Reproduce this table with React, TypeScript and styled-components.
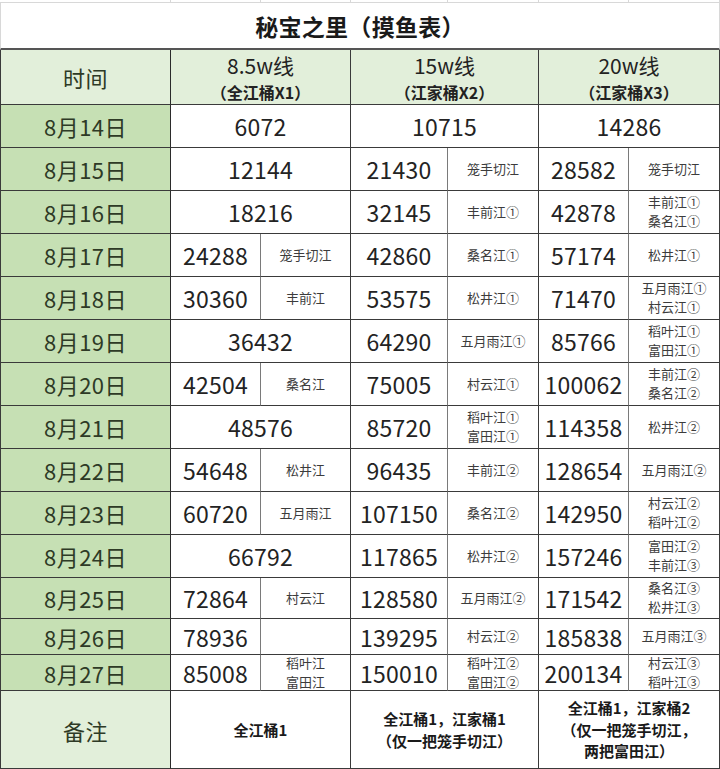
import React from "react";
import styled, { createGlobalStyle } from "styled-components";

const GlobalStyle = createGlobalStyle`
  html, body {
    margin: 0;
    padding: 0;
    background: #ffffff;
  }
  body {
    font-family: "Noto Sans CJK SC", "Noto Sans", sans-serif;
    color: #222;
  }
`;

type Split = { value: string; note?: string[] };
type Row = { date: string; cols: Split[]; merged: boolean[]; height: number };

const rows: Row[] = [
  { date: "8月14日", height: 43, merged: [true, true, true], cols: [{ value: "6072" }, { value: "10715" }, { value: "14286" }] },
  { date: "8月15日", height: 43, merged: [true, false, false], cols: [{ value: "12144" }, { value: "21430", note: ["笼手切江"] }, { value: "28582", note: ["笼手切江"] }] },
  { date: "8月16日", height: 43, merged: [true, false, false], cols: [{ value: "18216" }, { value: "32145", note: ["丰前江①"] }, { value: "42878", note: ["丰前江①", "桑名江①"] }] },
  { date: "8月17日", height: 43, merged: [false, false, false], cols: [{ value: "24288", note: ["笼手切江"] }, { value: "42860", note: ["桑名江①"] }, { value: "57174", note: ["松井江①"] }] },
  { date: "8月18日", height: 43, merged: [false, false, false], cols: [{ value: "30360", note: ["丰前江"] }, { value: "53575", note: ["松井江①"] }, { value: "71470", note: ["五月雨江①", "村云江①"] }] },
  { date: "8月19日", height: 43, merged: [true, false, false], cols: [{ value: "36432" }, { value: "64290", note: ["五月雨江①"] }, { value: "85766", note: ["稻叶江①", "富田江①"] }] },
  { date: "8月20日", height: 43, merged: [false, false, false], cols: [{ value: "42504", note: ["桑名江"] }, { value: "75005", note: ["村云江①"] }, { value: "100062", note: ["丰前江②", "桑名江②"] }] },
  { date: "8月21日", height: 43, merged: [true, false, false], cols: [{ value: "48576" }, { value: "85720", note: ["稻叶江①", "富田江①"] }, { value: "114358", note: ["松井江②"] }] },
  { date: "8月22日", height: 43, merged: [false, false, false], cols: [{ value: "54648", note: ["松井江"] }, { value: "96435", note: ["丰前江②"] }, { value: "128654", note: ["五月雨江②"] }] },
  { date: "8月23日", height: 43, merged: [false, false, false], cols: [{ value: "60720", note: ["五月雨江"] }, { value: "107150", note: ["桑名江②"] }, { value: "142950", note: ["村云江②", "稻叶江②"] }] },
  { date: "8月24日", height: 43, merged: [true, false, false], cols: [{ value: "66792" }, { value: "117865", note: ["松井江②"] }, { value: "157246", note: ["富田江②", "丰前江③"] }] },
  { date: "8月25日", height: 41, merged: [false, false, false], cols: [{ value: "72864", note: ["村云江"] }, { value: "128580", note: ["五月雨江②"] }, { value: "171542", note: ["桑名江③", "松井江③"] }] },
  { date: "8月26日", height: 36, merged: [false, false, false], cols: [{ value: "78936", note: [] }, { value: "139295", note: ["村云江②"] }, { value: "185838", note: ["五月雨江③"] }] },
  { date: "8月27日", height: 36, merged: [false, false, false], cols: [{ value: "85008", note: ["稻叶江", "富田江"] }, { value: "150010", note: ["稻叶江②", "富田江②"] }, { value: "200134", note: ["村云江③", "稻叶江③"] }] },
];

const heads = [
  { line: "8.5w线", sub: "（全江桶X1）" },
  { line: "15w线", sub: "（江家桶X2）" },
  { line: "20w线", sub: "（江家桶X3）" },
];

const remarks = [
  ["全江桶1"],
  ["全江桶1，江家桶1", "（仅一把笼手切江）"],
  ["全江桶1，江家桶2", "（仅一把笼手切江，", "两把富田江）"],
];

export default function App() {
  return (
    <>
      <GlobalStyle />
      <Sheet>
        <GhostRow>
          {Array.from({ length: 7 }).map((_, i) => (
            <Ghost key={i} />
          ))}
        </GhostRow>
        <Table>
          <Title>秘宝之里（摸鱼表）</Title>

          <DateCell $tone="head" $h={55}>时间</DateCell>
          {heads.map((h) => (
            <HeadCell key={h.line}>
              <HeadLine>{h.line}</HeadLine>
              <HeadSub>{h.sub}</HeadSub>
            </HeadCell>
          ))}

          {rows.map((r) => (
            <React.Fragment key={r.date}>
              <DateCell $tone="date" $h={r.height}>{r.date}</DateCell>
              {r.cols.map((c, i) =>
                r.merged[i] ? (
                  <NumCell key={i} $span={2} $h={r.height}>
                    {c.value}
                  </NumCell>
                ) : (
                  <React.Fragment key={i}>
                    <NumCell $span={1} $h={r.height}>{c.value}</NumCell>
                    <NoteCell $h={r.height}>
                      {(c.note ?? []).map((n) => (
                        <span key={n}>{n}</span>
                      ))}
                    </NoteCell>
                  </React.Fragment>
                )
              )}
            </React.Fragment>
          ))}

          <DateCell $tone="head" $h={78}>备注</DateCell>
          {remarks.map((lines, i) => (
            <RemarkCell key={i}>
              {lines.map((l) => (
                <span key={l}>{l}</span>
              ))}
            </RemarkCell>
          ))}
        </Table>
      </Sheet>
    </>
  );
}

const columns = "171px 90px 90px 97px 91px 90px 91px";

const Sheet = styled.div`
  width: 720px;
  display: flex;
  flex-direction: column;
`;

const GhostRow = styled.div`
  display: grid;
  grid-template-columns: ${columns};
  height: 2px;
  border-bottom: 1px solid #d8d8d8;
`;

const Ghost = styled.div`
  border-right: 1px solid #d8d8d8;
`;

const Table = styled.div`
  display: grid;
  grid-template-columns: ${columns};
  width: 720px;
`;

const Cell = styled.div`
  box-sizing: border-box;
  display: flex;
  align-items: center;
  justify-content: center;
  border-right: 1px solid #3a3a3a;
  border-bottom: 1px solid #3a3a3a;
  text-align: center;
  min-width: 0;
`;

const Title = styled(Cell)`
  grid-column: 1 / -1;
  height: 47px;
  font-size: 23px;
  font-weight: 700;
  color: #1a1a1a;
  letter-spacing: 0.3px;
  border-left: 1px solid #d8d8d8;
  border-right: 1px solid #d8d8d8;
  border-bottom: 2px solid #555;
`;

const DateCell = styled(Cell)<{ $tone: "head" | "date"; $h: number }>`
  height: ${(p) => p.$h}px;
  background: ${(p) => (p.$tone === "head" ? "#e2efda" : "#c6e0b4")};
  border-left: 1px solid #3a3a3a;
  border-right: 1.5px solid #2b2b2b;
  font-size: 22px;
  color: #2e3a26;
  letter-spacing: 0.5px;
`;

const HeadCell = styled(Cell)`
  grid-column: span 2;
  height: 55px;
  flex-direction: column;
  background: #e2efda;
  line-height: 1.45;
`;

const HeadLine = styled.span`
  font-size: 21px;
  color: #222;
`;

const HeadSub = styled.span`
  font-size: 16px;
  font-weight: 700;
  color: #222;
`;

const NumCell = styled(Cell)<{ $span: number; $h: number }>`
  grid-column: span ${(p) => p.$span};
  height: ${(p) => p.$h}px;
  font-size: 23px;
  color: #232323;
  letter-spacing: 0.2px;
  white-space: nowrap;
  overflow: hidden;
`;

const NoteCell = styled(Cell)<{ $h: number }>`
  height: ${(p) => p.$h}px;
  flex-direction: column;
  font-size: 13px;
  line-height: 1.45;
  color: #3c3c3c;
  white-space: nowrap;
  border-left: 1px solid #7a7a7a;
  margin-left: -1px;
`;

const RemarkCell = styled(Cell)`
  grid-column: span 2;
  height: 78px;
  flex-direction: column;
  font-size: 15px;
  font-weight: 700;
  line-height: 1.45;
  color: #1a1a1a;
`;
